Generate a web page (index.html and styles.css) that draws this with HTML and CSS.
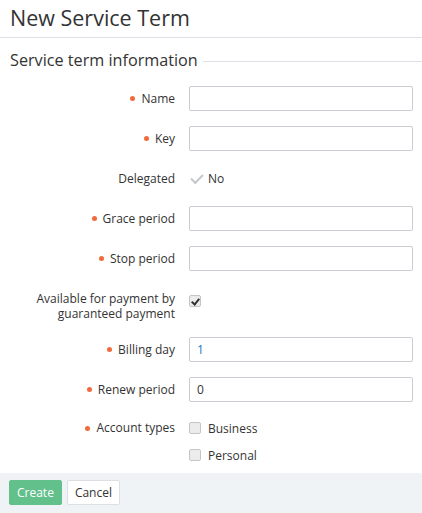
FILE: index.html
```html
<!DOCTYPE html>
<html lang="en">

<head>
    <meta charset="UTF-8">
    <meta name="viewport" content="width=device-width, initial-scale=1.0">
    <title>New Service Term</title>
    <link rel="stylesheet" href="styles.css">
</head>

<body>
    <header class="page-head">
        <h1>New Service Term</h1>
    </header>
    <form class="term-form">
        <div class="legend">Service term information</div>
        <div class="rows">
            <label class="lbl required" for="name">Name</label>
            <input class="field" type="text" id="name">

            <label class="lbl required" for="key">Key</label>
            <input class="field" type="text" id="key">

            <span class="lbl">Delegated</span>
            <span class="plain"><span class="tick"></span>No</span>

            <label class="lbl required" for="grace">Grace period</label>
            <input class="field" type="text" id="grace">

            <label class="lbl required" for="stop">Stop period</label>
            <input class="field" type="text" id="stop">

            <span class="lbl multi">Available for payment by guaranteed payment</span>
            <span class="check-wrap"><span class="box checked"></span></span>

            <label class="lbl required" for="billing">Billing day</label>
            <input class="field blue" type="text" id="billing" value="1">

            <label class="lbl required" for="renew">Renew period</label>
            <input class="field" type="text" id="renew" value="0">

            <span class="lbl required top">Account types</span>
            <div class="options">
                <span class="opt"><span class="box"></span>Business</span>
                <span class="opt"><span class="box"></span>Personal</span>
            </div>
        </div>
    </form>
    <footer class="actions">
        <button class="btn primary">Create</button>
        <button class="btn">Cancel</button>
    </footer>
</body>

</html>
```

FILE: styles.css
```css
html {
    font-family: 'Open Sans', sans-serif;
    font-size: 12px;
    color: #333;
}

body {
    margin: 0;
}

.page-head {
    height: 38px;
    border-bottom: 1px solid #dde1e6;
    padding: 0 10px;
    box-sizing: border-box;
}

.page-head h1 {
    margin: 0;
    font-size: 21.5px;
    font-weight: 400;
    line-height: 36px;
}

.legend {
    display: flex;
    align-items: center;
    font-size: 16.2px;
    line-height: 22px;
    margin: 11px 0 15px 10px;
}

.legend::after {
    content: '';
    flex: 1;
    border-top: 1px solid #dde1e6;
    margin-left: 5px;
    margin-top: 2px;
}

.rows {
    display: grid;
    grid-template-columns: 175px 1fr;
    column-gap: 14px;
    row-gap: 15px;
    padding-right: 9px;
}

.lbl {
    display: flex;
    align-items: center;
    justify-content: flex-end;
    text-align: right;
    min-height: 25px;
    line-height: 16px;
}

.lbl.required::before {
    content: '';
    flex: none;
    width: 5px;
    height: 5px;
    border-radius: 50%;
    background: #f26a3c;
    margin-right: 6px;
}

.lbl.multi {
    align-items: flex-start;
    padding: 5px 0 1px;
    line-height: 15px;
}

.lbl.top {
    align-self: start;
    min-height: 22px;
    height: 22px;
}

.field {
    height: 25px;
    box-sizing: border-box;
    border: 1px solid #c9ccd0;
    border-radius: 2px;
    padding: 0 7px;
    font-family: inherit;
    font-size: 12px;
    color: #333;
    outline: none;
}

.field.blue {
    color: #1479c7;
}

.plain {
    display: flex;
    align-items: center;
}

.tick {
    width: 10px;
    height: 5px;
    border-left: 2px solid #c4c8cc;
    border-bottom: 2px solid #c4c8cc;
    transform: rotate(-45deg);
    margin: 0 5px 3px 2px;
}

.check-wrap {
    padding-top: 5px;
}

.box {
    display: inline-block;
    flex: none;
    width: 12px;
    height: 12px;
    box-sizing: border-box;
    border: 1px solid #c2c5c9;
    border-radius: 2px;
    background: #ececec;
    vertical-align: middle;
    position: relative;
}

.box.checked::after {
    content: '';
    position: absolute;
    left: 3px;
    top: 1px;
    width: 3px;
    height: 6px;
    border-right: 2px solid #333;
    border-bottom: 2px solid #333;
    transform: rotate(40deg);
}

.options {
    display: flex;
    flex-direction: column;
    gap: 5px;
}

.opt {
    display: flex;
    align-items: center;
    height: 22px;
    gap: 7px;
}

.actions {
    margin-top: 7px;
    background: #f0f3f6;
    padding: 7px 9px 8px;
    display: flex;
    gap: 5px;
}

.btn {
    height: 25px;
    padding: 0 7px;
    border: 1px solid #dcdfe3;
    border-radius: 2px;
    background: #fff;
    font-family: inherit;
    font-size: 12px;
    color: #333;
}

.btn.primary {
    background: #62c08b;
    border-color: #62c08b;
    color: #fff;
}
```
